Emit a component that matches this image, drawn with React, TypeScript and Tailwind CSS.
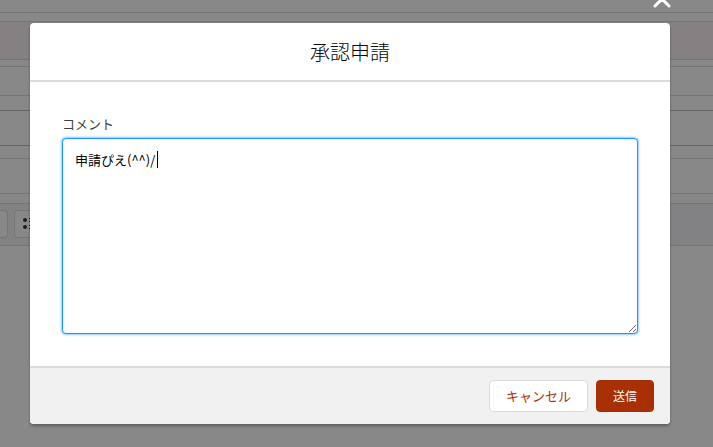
import { useState } from "react";

function ToolbarIcon() {
  return (
    <svg width="16" height="14" viewBox="0 0 16 14" fill="#1c1c1c" aria-hidden="true">
      <circle cx="3" cy="3" r="2" />
      <circle cx="3" cy="10" r="2" />
      <rect x="7" y="1" width="8" height="1" />
      <rect x="7" y="4" width="8" height="1" />
      <rect x="7" y="8" width="8" height="1" />
      <rect x="7" y="11" width="8" height="1" />
    </svg>
  );
}

function CloseIcon() {
  return (
    <svg
      width="20"
      height="20"
      viewBox="0 0 20 20"
      fill="none"
      stroke="white"
      strokeWidth="3"
      strokeLinecap="round"
      aria-hidden="true"
    >
      <path d="M3 1 17 15M17 1 3 15" />
    </svg>
  );
}

// Record form that sits dimmed behind the dialog
function PageBehind() {
  return (
    <div className="min-h-screen bg-[#888888]" aria-hidden="true">
      <div className="h-[13px] border-b border-[#757575]" />
      <div className="h-[9px] border-b border-[#757575]" />
      <div className="h-[38px] border-b border-[#757374] bg-[#858082]" />
      <div className="h-[7px] border-b border-[#757575]" />
      <div className="h-[29px] border-b border-[#757575]" />
      <div className="h-[15px] border-b border-[#656565]" />
      <div className="h-[35px] border-b border-[#656565]" />
      <div className="h-[13px] border-b border-[#757575]" />
      <div className="h-[35px] border-b border-[#757575]" />
      <div className="h-[10px] border-b border-[#757575]" />
      <div className="flex h-[42px] items-start gap-[6px] border-b border-[#757577] bg-[#828284] pt-[6px]">
        <span className="h-7 w-2 rounded-r border border-l-0 border-[#757577] bg-[#888888]" />
        <span className="flex h-7 w-10 items-center rounded border border-[#757577] bg-[#888888] pl-[7px]">
          <ToolbarIcon />
        </span>
      </div>
    </div>
  );
}

function CommentField() {
  const initial = "申請ぴえ(^^)/";
  const [comment, setComment] = useState(initial);

  return (
    <div>
      <label htmlFor="comment" className="block text-[13px] leading-5 text-[#3e3e3c]">
        コメント
      </label>
      <div className="relative mt-1">
        <textarea
          id="comment"
          value={comment}
          onChange={(e) => setComment(e.target.value)}
          className="block h-49 w-full resize-y rounded border border-[#1b96ff] bg-white px-3 py-[11px] text-[13px] leading-5 text-black shadow-[0_0_3px_#1b96ff] outline-none"
        />
        {comment === initial && (
          <span className="pointer-events-none absolute top-[13px] left-[95px] h-[17px] w-px bg-black" />
        )}
      </div>
    </div>
  );
}

export default function App() {
  return (
    <div className="relative overflow-hidden font-['Noto_Sans_CJK_JP',sans-serif]">
      <PageBehind />
      <div className="absolute inset-0 pt-[23px] pr-[43px] pl-[30px]">
        <div className="relative" role="dialog" aria-modal="true" aria-labelledby="dialog-title">
          <button type="button" aria-label="閉じる" className="absolute -top-8 -right-[2px]">
            <CloseIcon />
          </button>
          <div className="rounded bg-white shadow-[0_2px_3px_rgba(0,0,0,0.3)]">
            <header className="border-b-2 border-[#dddbda] p-4 text-center">
              <h2 id="dialog-title" className="text-xl leading-[25px] font-light text-[#080707]">
                承認申請
              </h2>
            </header>
            <div className="px-8 pt-8 pb-8">
              <CommentField />
            </div>
            <footer className="flex justify-end gap-2 rounded-b border-t-2 border-[#dddbda] bg-[#f1f1f1] px-4 py-3">
              <button
                type="button"
                className="h-8 rounded border border-[#dddbda] bg-white px-4 text-[13px] text-[#a92f05]"
              >
                キャンセル
              </button>
              <button
                type="button"
                className="h-8 rounded border border-[#a92f05] bg-[#a92f05] px-4 text-xs text-white"
              >
                送信
              </button>
            </footer>
          </div>
        </div>
      </div>
    </div>
  );
}
